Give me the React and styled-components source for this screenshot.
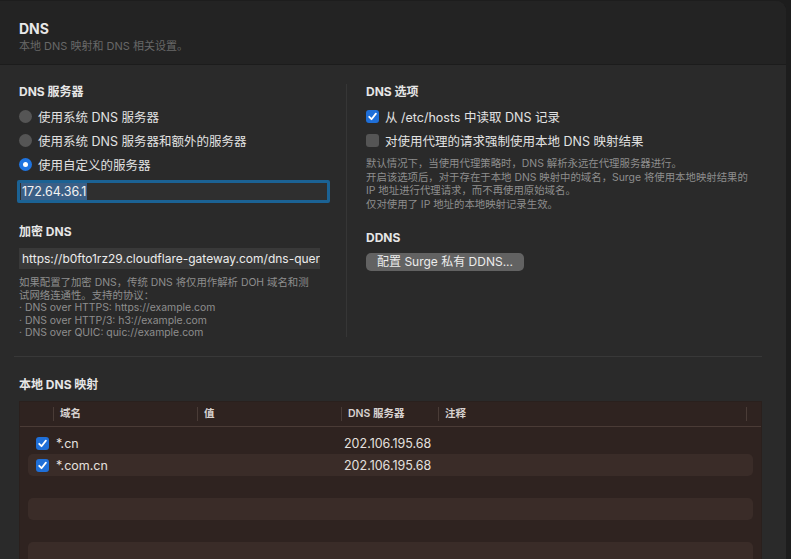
import React from 'react';
import styled, { createGlobalStyle } from 'styled-components';

const GlobalStyle = createGlobalStyle`
  html, body {
    margin: 0;
    padding: 0;
    background: #1d1d1d;
  }
  body {
    font-family: "Inter", "Noto Sans CJK SC", sans-serif;
    color: #dedede;
    -webkit-font-smoothing: antialiased;
  }
`;

const mappings = [
  { on: true, domain: '*.cn', value: '', server: '202.106.195.68', note: '' },
  { on: true, domain: '*.com.cn', value: '', server: '202.106.195.68', note: '' },
  null,
  null,
  null,
  null,
];

const Check = ({ on }) => (
  <CheckBox $on={on}>
    {on && (
      <svg width="11" height="11" viewBox="0 0 11 11">
        <path d="M2.2 5.8 L4.5 8.2 L8.9 2.6" fill="none" stroke="#fff" strokeWidth="1.8" strokeLinecap="round" strokeLinejoin="round" />
      </svg>
    )}
  </CheckBox>
);

const App = () => {
  return (
    <>
      <GlobalStyle />
      <Window>
        <Header>
          <Title>DNS</Title>
          <Subtitle>本地 DNS 映射和 DNS 相关设置。</Subtitle>
        </Header>

        <Columns>
          <LeftCol>
            <SectionTitle>DNS 服务器</SectionTitle>
            <OptionList>
              <Option><Radio /> 使用系统 DNS 服务器</Option>
              <Option><Radio /> 使用系统 DNS 服务器和额外的服务器</Option>
              <Option><Radio $on /> 使用自定义的服务器</Option>
            </OptionList>
            <FocusField>
              <Selected>172.64.36.1</Selected>
            </FocusField>

            <SectionTitle $top={21}>加密 DNS</SectionTitle>
            <Field>https://b0fto1rz29.cloudflare-gateway.com/dns-quer</Field>
            <Help $top={8} $lh={12.6}>
              如果配置了加密 DNS，传统 DNS 将仅用作解析 DOH 域名和测
              <br />试网络连通性。支持的协议：
              <br />· DNS over HTTPS: https://example.com
              <br />· DNS over HTTP/3: h3://example.com
              <br />· DNS over QUIC: quic://example.com
            </Help>
          </LeftCol>

          <Divider />

          <RightCol>
            <SectionTitle>DNS 选项</SectionTitle>
            <OptionList>
              <Option><Check on /> 从 /etc/hosts 中读取 DNS 记录</Option>
              <Option><Check /> 对使用代理的请求强制使用本地 DNS 映射结果</Option>
            </OptionList>
            <Help $top={9} $lh={13.6}>
              默认情况下，当使用代理策略时，DNS 解析永远在代理服务器进行。
              <br />开启该选项后，对于存在于本地 DNS 映射中的域名，Surge 将使用本地映射结果的
              <br />IP 地址进行代理请求，而不再使用原始域名。
              <br />仅对使用了 IP 地址的本地映射记录生效。
            </Help>

            <SectionTitle $top={19}>DDNS</SectionTitle>
            <Button>配置 Surge 私有 DDNS...</Button>
          </RightCol>
        </Columns>

        <Separator />

        <Lower>
          <SectionTitle>本地 DNS 映射</SectionTitle>
          <Table>
            <HeadRow>
              <HeadCell />
              <HeadCell $sep>域名</HeadCell>
              <HeadCell $sep>值</HeadCell>
              <HeadCell $sep>DNS 服务器</HeadCell>
              <HeadCell $sep>注释</HeadCell>
              <HeadCell $sep />
            </HeadRow>
            <Rows>
              {mappings.map((m, i) => (
                <Row key={i} $striped={i % 2 === 1}>
                  {m && (
                    <>
                      <CheckCell><Check on={m.on} /></CheckCell>
                      <Cell>{m.domain}</Cell>
                      <Cell>{m.value}</Cell>
                      <Cell>{m.server}</Cell>
                      <Cell>{m.note}</Cell>
                    </>
                  )}
                </Row>
              ))}
            </Rows>
          </Table>
        </Lower>
      </Window>
    </>
  );
};

// Styled Components
const Window = styled.div`
  width: 786px;
  height: 559px;
  margin-top: 1px;
  background: #2a2a2a;
  border-top-right-radius: 10px;
  overflow: hidden;
`;

const Header = styled.div`
  height: 64px;
  box-sizing: border-box;
  padding: 19px 19px 0;
  background: #232323;
  border-bottom: 1px solid #1c1c1c;
`;

const Title = styled.div`
  font-size: 14px;
  font-weight: 700;
  line-height: 17px;
  color: #e8e8e8;
`;

const Subtitle = styled.div`
  margin-top: 2px;
  font-size: 11px;
  line-height: 14px;
  color: #686868;
`;

const Columns = styled.div`
  display: flex;
  padding: 19px 0 0 19px;
  height: 291px;
  box-sizing: border-box;
`;

const LeftCol = styled.div`
  width: 327px;
  display: flex;
  flex-direction: column;
  align-items: flex-start;
`;

const Divider = styled.div`
  width: 1px;
  background: #363636;
  margin-bottom: 19px;
`;

const RightCol = styled.div`
  flex: 1;
  padding-left: 19px;
  display: flex;
  flex-direction: column;
  align-items: flex-start;
`;

const SectionTitle = styled.div`
  margin-top: ${(p) => p.$top || 0}px;
  font-size: 12px;
  font-weight: 700;
  line-height: 16px;
  color: #e6e6e6;
`;

const OptionList = styled.div`
  display: flex;
  flex-direction: column;
  gap: 8px;
  margin-top: 8px;
`;

const Option = styled.div`
  display: flex;
  align-items: center;
  gap: 6px;
  height: 16px;
  font-size: 12.5px;
  color: #e2e2e2;
`;

const Radio = styled.span`
  width: 13px;
  height: 13px;
  border-radius: 50%;
  box-sizing: border-box;
  background: ${(p) => (p.$on ? '#1f74e0' : '#555')};
  display: inline-flex;
  align-items: center;
  justify-content: center;

  &::after {
    content: '';
    width: 5px;
    height: 5px;
    border-radius: 50%;
    background: #fff;
    display: ${(p) => (p.$on ? 'block' : 'none')};
  }
`;

const CheckBox = styled.span`
  width: 13px;
  height: 13px;
  border-radius: 3px;
  box-sizing: border-box;
  flex-shrink: 0;
  background: ${(p) => (p.$on ? '#1f6fd8' : '#555')};
  display: inline-flex;
  align-items: center;
  justify-content: center;
`;

const FocusField = styled.div`
  margin-top: 8px;
  margin-left: -2px;
  width: 306px;
  height: 17px;
  background: #2f2f2f;
  border: 3px solid #1b6294;
  border-radius: 2px;
  display: flex;
  align-items: center;
  padding-left: 1px;
`;

const Selected = styled.span`
  background: #3b5f86;
  color: #f2f2f2;
  font-size: 12.5px;
  line-height: 17px;
  padding: 0 1px;
`;

const Field = styled.div`
  margin-top: 8px;
  width: 301px;
  height: 21px;
  box-sizing: border-box;
  background: #393939;
  padding: 0 3px;
  font-size: 12px;
  line-height: 21px;
  color: #ececec;
  white-space: nowrap;
  overflow: hidden;
`;

const Help = styled.div`
  margin-top: ${(p) => p.$top}px;
  font-size: 10.4px;
  line-height: ${(p) => p.$lh}px;
  color: #8e8e8e;
  white-space: nowrap;
`;

const Button = styled.button`
  margin-top: 7px;
  height: 18px;
  padding: 0 11px;
  border: none;
  border-radius: 5px;
  background: #626262;
  color: #ececec;
  font-family: inherit;
  font-size: 12px;
  line-height: 18px;
`;

const Separator = styled.div`
  height: 1px;
  margin: 0 24px 0 14px;
  background: #383838;
`;

const Lower = styled.div`
  padding: 20px 0 0 19px;
`;

const Table = styled.div`
  margin-top: 8px;
  width: 743px;
  height: 200px;
  background: #2f2320;
  border: 1px solid #2a201d;
  box-sizing: border-box;
`;

const HeadRow = styled.div`
  display: grid;
  grid-template-columns: 33px 144px 144px 97px 308px 1fr;
  height: 24px;
  align-items: center;
  border-bottom: 1px solid #4a3b36;
`;

const HeadCell = styled.div`
  height: 14px;
  padding-left: 6px;
  font-size: 10.5px;
  font-weight: 600;
  line-height: 14px;
  color: #d8d2d0;
  border-left: ${(p) => (p.$sep ? '1px solid #4a3c37' : 'none')};
`;

const Rows = styled.div`
  padding: 5px 8px 0;
  display: flex;
  flex-direction: column;
`;

const Row = styled.div`
  display: grid;
  grid-template-columns: 25px 144px 144px 97px 1fr;
  align-items: center;
  height: 22px;
  border-radius: 5px;
  background: ${(p) => (p.$striped ? '#3a2c28' : 'transparent')};
`;

const CheckCell = styled.div`
  display: flex;
  align-items: center;
  padding-left: 8px;
`;

const Cell = styled.div`
  padding-left: 3px;
  font-size: 12.5px;
  color: #e4e0df;
  white-space: nowrap;
`;

export default App;
